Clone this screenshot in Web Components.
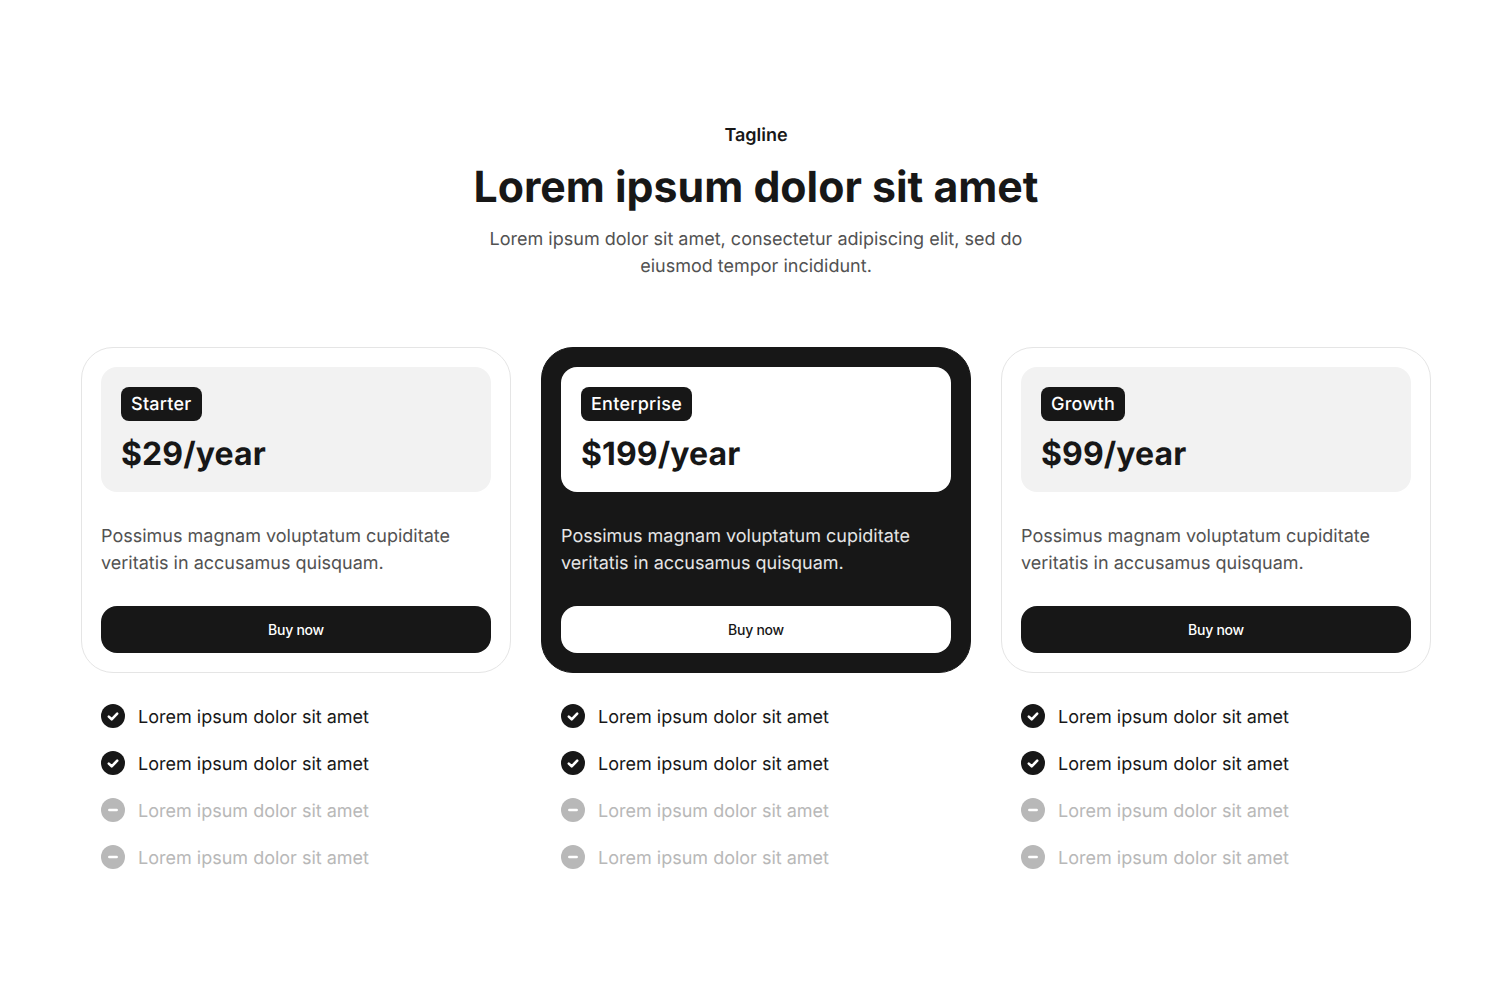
<!DOCTYPE html>
<html lang="en">
<head>
<meta charset="utf-8">
<title>Pricing</title>
<style>
  html, body { margin: 0; background: #fff; }
  body { font-family: Inter, "Liberation Sans", sans-serif; color: #171717; text-rendering: geometricPrecision; font-optical-sizing: none; }
  pricing-section { min-height: 991px; }
</style>
</head>
<body>
<pricing-section>
  <section-head slot="head" tagline="Tagline" title="Lorem ipsum dolor sit amet">
    Lorem ipsum dolor sit amet, consectetur adipiscing elit, sed do eiusmod tempor incididunt.
  </section-head>
  <price-plan name="Starter" price="$29/year">
    <plan-feature>Lorem ipsum dolor sit amet</plan-feature>
    <plan-feature>Lorem ipsum dolor sit amet</plan-feature>
    <plan-feature off>Lorem ipsum dolor sit amet</plan-feature>
    <plan-feature off>Lorem ipsum dolor sit amet</plan-feature>
  </price-plan>
  <price-plan name="Enterprise" price="$199/year" featured>
    <plan-feature>Lorem ipsum dolor sit amet</plan-feature>
    <plan-feature>Lorem ipsum dolor sit amet</plan-feature>
    <plan-feature off>Lorem ipsum dolor sit amet</plan-feature>
    <plan-feature off>Lorem ipsum dolor sit amet</plan-feature>
  </price-plan>
  <price-plan name="Growth" price="$99/year">
    <plan-feature>Lorem ipsum dolor sit amet</plan-feature>
    <plan-feature>Lorem ipsum dolor sit amet</plan-feature>
    <plan-feature off>Lorem ipsum dolor sit amet</plan-feature>
    <plan-feature off>Lorem ipsum dolor sit amet</plan-feature>
  </price-plan>
</pricing-section>

<script>
  class PricingSection extends HTMLElement {
    constructor() {
      super();
      this.attachShadow({ mode: 'open' });
      this.shadowRoot.innerHTML = `
        <style>
          :host { display: block; box-sizing: border-box; padding: 122px 81px 0; }
          .plans { display: grid; grid-template-columns: repeat(3, 430px); gap: 30px; margin-top: 67px; }
        </style>
        <slot name="head"></slot>
        <div class="plans"><slot></slot></div>
      `;
    }
  }

  class SectionHead extends HTMLElement {
    constructor() {
      super();
      this.attachShadow({ mode: 'open' });
      this.shadowRoot.innerHTML = `
        <style>
          :host { display: flex; flex-direction: column; align-items: center; text-align: center; }
          .tagline { font-size: 18px; line-height: 27px; font-weight: 600; color: #171717; }
          h1 { margin: 12px 0; font-size: 42.8px; line-height: 53px; font-weight: 700; color: #171717; }
          p { margin: 0; width: 560px; font-size: 18px; line-height: 27px; color: #525252; }
        </style>
        <div class="tagline">${this.getAttribute('tagline')}</div>
        <h1>${this.getAttribute('title')}</h1>
        <p><slot></slot></p>
      `;
    }
  }

  class PricePlan extends HTMLElement {
    constructor() {
      super();
      this.attachShadow({ mode: 'open' });
      this.shadowRoot.innerHTML = `
        <style>
          :host { display: block; --ink: #171717; }
          .card {
            box-sizing: border-box;
            height: 326px;
            padding: 19px;
            border: 1px solid #e5e5e5;
            border-radius: 32px;
            background: #fff;
            display: flex;
            flex-direction: column;
          }
          .top {
            box-sizing: border-box;
            height: 125px;
            padding: 20px;
            border-radius: 16px;
            background: #f2f2f2;
          }
          .badge {
            display: inline-block;
            padding: 5px 10px 3px;
            border-radius: 8px;
            background: var(--ink);
            color: #fff;
            font-size: 18px;
            line-height: 26px;
            font-weight: 500;
            letter-spacing: .25px;
            vertical-align: top;
          }
          .price { margin-top: 12px; font-size: 32px; line-height: 42px; font-weight: 700; color: var(--ink); letter-spacing: .1px; }
          .desc { margin: 31px 0 0; font-size: 18px; line-height: 27px; color: #525252; }
          button {
            margin-top: 29px;
            height: 47px;
            border: 0;
            border-radius: 16px;
            background: var(--ink);
            color: #fff;
            font: 500 14px/20px Inter, "Liberation Sans", sans-serif;
            letter-spacing: -.25px;
          }
          :host([featured]) .card { background: var(--ink); border-color: var(--ink); }
          :host([featured]) .top { background: #fff; }
          :host([featured]) .desc { color: #e5e5e5; }
          :host([featured]) button { background: #fff; color: var(--ink); }
          ul { list-style: none; margin: 31px 0 0; padding: 0 20px; display: flex; flex-direction: column; gap: 20px; }
        </style>
        <div class="card">
          <div class="top">
            <span class="badge">${this.getAttribute('name')}</span>
            <div class="price">${this.getAttribute('price')}</div>
          </div>
          <p class="desc">Possimus magnam voluptatum cupiditate veritatis in accusamus quisquam.</p>
          <button type="button">Buy now</button>
        </div>
        <ul><slot></slot></ul>
      `;
    }
  }

  class PlanFeature extends HTMLElement {
    constructor() {
      super();
      this.attachShadow({ mode: 'open' });
      const off = this.hasAttribute('off');
      // check or dash inside the round icon
      const mark = off
        ? '<path d="M8.3 12h7.4" stroke="#fff" stroke-width="2.5" stroke-linecap="round" fill="none"/>'
        : '<path d="M7.8 12.6l2.9 2.7 5.5-5.6" stroke="#fff" stroke-width="2.6" stroke-linecap="round" stroke-linejoin="round" fill="none"/>';
      this.shadowRoot.innerHTML = `
        <style>
          :host { display: flex; align-items: flex-start; gap: 13px; font-size: 18px; line-height: 27px; color: #171717; }
          :host([off]) { color: #b8b8b8; }
          svg { width: 24px; height: 24px; flex: none; }
        </style>
        <svg viewBox="0 0 24 24"><circle cx="12" cy="12" r="12" fill="currentColor"/>${mark}</svg>
        <span><slot></slot></span>
      `;
    }
  }

  customElements.define('pricing-section', PricingSection);
  customElements.define('section-head', SectionHead);
  customElements.define('price-plan', PricePlan);
  customElements.define('plan-feature', PlanFeature);
</script>
</body>
</html>
